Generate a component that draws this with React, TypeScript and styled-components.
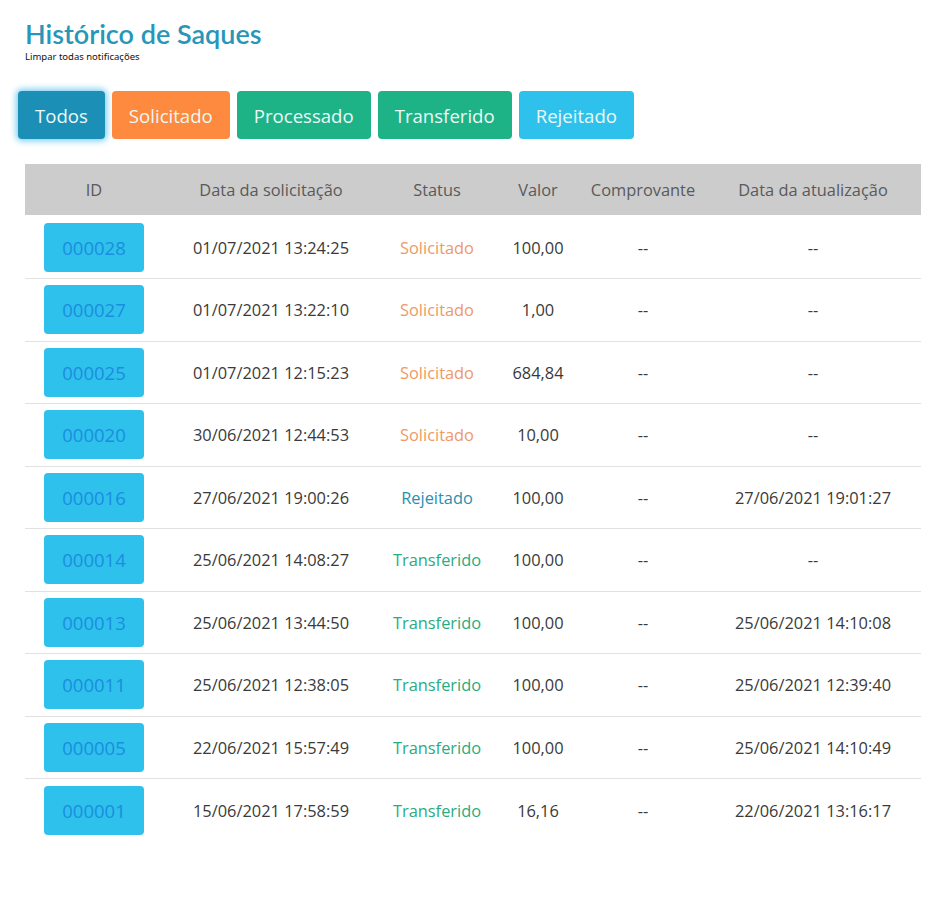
import React from "react";
import styled, { createGlobalStyle } from "styled-components";

const GlobalStyle = createGlobalStyle`
  html, body { margin: 0; padding: 0; background: #ffffff; }
  body { font-family: "Open Sans", "Noto Sans", sans-serif; color: #333; }
`;

const Page = styled.div`
  padding: 17px 25px 40px 25px;
  width: 896px;
`;

const Title = styled.h1`
  margin: 0;
  font-family: "Lato", "Noto Sans", sans-serif;
  font-weight: 600;
  font-size: 27px;
  line-height: 34px;
  color: #2796b8;
`;

const Subtitle = styled.div`
  font-family: "Noto Sans", sans-serif;
  font-size: 9.5px;
  line-height: 12px;
  color: #111;
`;

const FilterBar = styled.div`
  display: flex;
  gap: 7px;
  margin: 28px 0 0 -7px;
`;

type Tone = "blue" | "orange" | "green" | "sky";
const toneBg: Record<Tone, string> = {
  blue: "#1b8fb6",
  orange: "#fd8a3f",
  green: "#1db386",
  sky: "#2ec1ec",
};

const FilterButton = styled.button<{ $tone: Tone; $active?: boolean }>`
  height: 48px;
  padding: 0 17px;
  border: none;
  border-radius: 4px;
  background: ${(p) => toneBg[p.$tone]};
  color: #eaf8f6;
  font-family: "Open Sans", "Noto Sans", sans-serif;
  font-size: 18.6px;
  box-shadow: ${(p) => (p.$active ? "0 0 6px 2px rgba(80, 190, 235, 0.75)" : "none")};
  cursor: pointer;
`;

const Table = styled.div`
  margin-top: 25px;
  width: 896px;
`;

const cols = "138px 216px 116px 86px 124px 216px";

const HeaderRow = styled.div`
  display: grid;
  grid-template-columns: ${cols};
  height: 51px;
  align-items: center;
  background: #cccccc;
  margin-bottom: 1.5px;
`;

const HeaderCell = styled.div`
  text-align: center;
  font-size: 16.4px;
  color: #5a5a5a;
`;

const Row = styled.div<{ $last?: boolean }>`
  display: grid;
  grid-template-columns: ${cols};
  box-sizing: border-box;
  height: 62.5px;
  align-items: center;
  border-bottom: ${(p) => (p.$last ? "none" : "1px solid #e2e2e2")};
`;

const Cell = styled.div`
  text-align: center;
  font-size: 16.4px;
  color: #3a3a3a;
`;

const IdButton = styled.button`
  width: 100px;
  height: 49px;
  margin: 0 auto;
  display: block;
  border: none;
  border-radius: 4px;
  background: #2ec1ec;
  color: #1b8de0;
  font-family: "Open Sans", "Noto Sans", sans-serif;
  font-size: 18.5px;
`;

type Status = "Solicitado" | "Rejeitado" | "Transferido";
const statusColor: Record<Status, string> = {
  Solicitado: "#ee9967",
  Rejeitado: "#2a8fb1",
  Transferido: "#2aab82",
};

const StatusCell = styled(Cell)<{ $status: Status }>`
  color: ${(p) => statusColor[p.$status]};
`;

const rows: { id: string; date: string; status: Status; value: string; upd: string }[] = [
  { id: "000028", date: "01/07/2021 13:24:25", status: "Solicitado", value: "100,00", upd: "--" },
  { id: "000027", date: "01/07/2021 13:22:10", status: "Solicitado", value: "1,00", upd: "--" },
  { id: "000025", date: "01/07/2021 12:15:23", status: "Solicitado", value: "684,84", upd: "--" },
  { id: "000020", date: "30/06/2021 12:44:53", status: "Solicitado", value: "10,00", upd: "--" },
  { id: "000016", date: "27/06/2021 19:00:26", status: "Rejeitado", value: "100,00", upd: "27/06/2021 19:01:27" },
  { id: "000014", date: "25/06/2021 14:08:27", status: "Transferido", value: "100,00", upd: "--" },
  { id: "000013", date: "25/06/2021 13:44:50", status: "Transferido", value: "100,00", upd: "25/06/2021 14:10:08" },
  { id: "000011", date: "25/06/2021 12:38:05", status: "Transferido", value: "100,00", upd: "25/06/2021 12:39:40" },
  { id: "000005", date: "22/06/2021 15:57:49", status: "Transferido", value: "100,00", upd: "25/06/2021 14:10:49" },
  { id: "000001", date: "15/06/2021 17:58:59", status: "Transferido", value: "16,16", upd: "22/06/2021 13:16:17" },
];

export default function App() {
  return (
    <>
      <GlobalStyle />
      <Page>
        <Title>Histórico de Saques</Title>
        <Subtitle>Limpar todas notificações</Subtitle>
        <FilterBar>
          <FilterButton $tone="blue" $active>Todos</FilterButton>
          <FilterButton $tone="orange">Solicitado</FilterButton>
          <FilterButton $tone="green">Processado</FilterButton>
          <FilterButton $tone="green">Transferido</FilterButton>
          <FilterButton $tone="sky">Rejeitado</FilterButton>
        </FilterBar>
        <Table>
          <HeaderRow>
            <HeaderCell>ID</HeaderCell>
            <HeaderCell>Data da solicitação</HeaderCell>
            <HeaderCell>Status</HeaderCell>
            <HeaderCell>Valor</HeaderCell>
            <HeaderCell>Comprovante</HeaderCell>
            <HeaderCell>Data da atualização</HeaderCell>
          </HeaderRow>
          {rows.map((r, i) => (
            <Row key={r.id} $last={i === rows.length - 1}>
              <Cell>
                <IdButton>{r.id}</IdButton>
              </Cell>
              <Cell>{r.date}</Cell>
              <StatusCell $status={r.status}>{r.status}</StatusCell>
              <Cell>{r.value}</Cell>
              <Cell>--</Cell>
              <Cell>{r.upd}</Cell>
            </Row>
          ))}
        </Table>
      </Page>
    </>
  );
}
